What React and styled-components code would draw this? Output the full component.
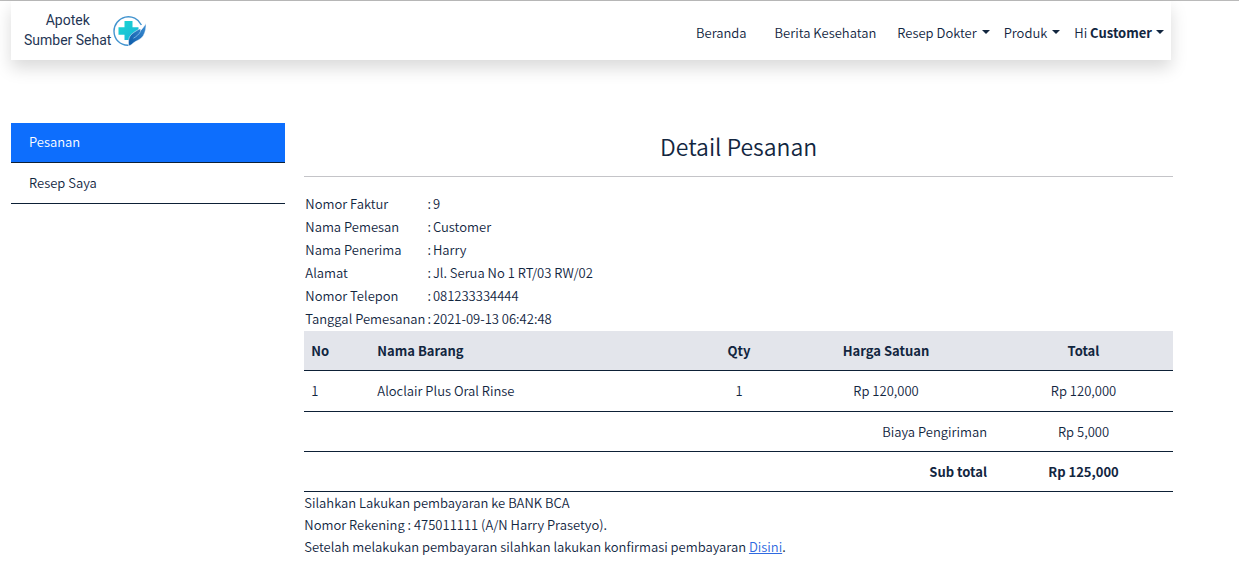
import React from "react";
import styled, { createGlobalStyle } from "styled-components";

const ink = "#12263f";
const line = "#0d2036";

const GlobalStyle = createGlobalStyle`
  *, *::before, *::after { box-sizing: border-box; }
  body {
    margin: 0;
    background: #fff;
    color: ${ink};
    font-family: "Noto Sans CJK JP", "Noto Sans", sans-serif;
    font-size: 13px;
    font-weight: 350;
    line-height: 22px;
  }
  button { font: inherit; color: inherit; }
  b { font-weight: 700; }
`;

const Page = styled.div`
  border-top: 1px solid #bababa;
  padding: 0 66px 24px 11px;
`;

const Header = styled.header`
  display: flex;
  align-items: center;
  justify-content: space-between;
  height: 59px;
  margin-right: 2px;
  background: #fff;
  box-shadow: 0 8px 16px rgba(0, 0, 0, 0.15);
`;

const Brand = styled.a`
  display: flex;
  align-items: center;
  gap: 2px;
  padding-left: 13px;
  color: #1f3655;
  text-decoration: none;
`;

const BrandName = styled.span`
  padding-bottom: 2px;
  font-family: Roboto, sans-serif;
  font-size: 14px;
  font-weight: 400;
  line-height: 20px;
  text-align: center;
`;

const Nav = styled.nav`
  display: flex;
  align-items: center;
  padding-top: 5px;
`;

const NavLink = styled.a`
  margin-right: ${(p) => p.$space}px;
  padding: 0 7px;
  color: inherit;
  text-decoration: none;
`;

const NavToggle = styled.button`
  display: flex;
  align-items: center;
  gap: ${(p) => p.$gap}px;
  padding: 0 7px;
  border: 0;
  background: none;
  white-space: pre;
  cursor: pointer;

  &::after {
    content: "";
    margin-bottom: 3px;
    border-top: 4px solid;
    border-right: 4px solid transparent;
    border-left: 4px solid transparent;
  }
`;

const Columns = styled.div`
  display: grid;
  grid-template-columns: 24fr 76fr;
  gap: 19px;
  align-items: start;
  padding-top: 63px;
`;

const SideMenu = styled.nav`
  display: flex;
  flex-direction: column;
`;

const SideLink = styled.a`
  padding: 8px 18px 9px;
  border-bottom: 1px solid ${line};
  background: ${(p) => (p.$active ? "#0d6efd" : "#fff")};
  color: ${(p) => (p.$active ? "#fff" : ink)};
  text-decoration: none;

  & + & { padding-top: 9px; }
`;

const Title = styled.h1`
  margin: 0;
  padding: 7px 0 14px;
  border-bottom: 1px solid #c4c4c8;
  font-size: 23px;
  font-weight: inherit;
  line-height: 32px;
  text-align: center;
`;

const InfoTable = styled.table`
  margin: 15px 0 1px;
  border-collapse: collapse;
  line-height: 21px;

  th, td {
    padding: 1px;
    font-weight: inherit;
    text-align: left;
  }
`;

const ItemTable = styled.table`
  width: 100%;
  table-layout: fixed;
  border-collapse: separate;
  border-spacing: 0;

  thead { background: #e3e5eb; }
  tbody td { height: 41px; }
`;

const Col = styled.col`
  width: ${(p) => p.$width}px;
`;

const Cell = styled.td`
  height: 40px;
  padding: 8px 7px;
  border-bottom: 1px solid ${line};
  font-weight: ${(p) => (p.$bold ? 700 : "inherit")};
  text-align: ${(p) => p.$align || "left"};
`;

const Payment = styled.p`
  margin: 0;
`;

const TextLink = styled.a`
  color: #2f6ae0;
`;

const details = [
  ["Nomor Faktur", "9"],
  ["Nama Pemesan", "Customer"],
  ["Nama Penerima", "Harry"],
  ["Alamat", "Jl. Serua No 1 RT/03 RW/02"],
  ["Nomor Telepon", "081233334444"],
  ["Tanggal Pemesanan", "2021-09-13 06:42:48"],
];

const items = [
  { no: 1, name: "Aloclair Plus Oral Rinse", qty: 1, price: "Rp 120,000", total: "Rp 120,000" },
];

function Logo() {
  return (
    <svg width="34" height="32" viewBox="0 0 34 32" aria-hidden="true">
      <defs>
        <linearGradient id="cross" x1="0" y1="0" x2="1" y2="1">
          <stop offset="0" stopColor="#1bd6cf" />
          <stop offset="1" stopColor="#18b4dc" />
        </linearGradient>
        <linearGradient id="hand" x1="1" y1="0" x2="0" y2="1">
          <stop offset="0" stopColor="#3f8fd4" />
          <stop offset="1" stopColor="#0b5aa8" />
        </linearGradient>
      </defs>
      <path d="M15.5 30.2C7 30.6 1 24 1 16.2A14.4 14.4 0 0 1 28.4 10" fill="none" stroke="#4394cf" strokeWidth="1.4" />
      <path d="M11.500 6h8v6.200h6v7.600h-6V25h-8v-5.200H5.500v-7.600h6z" fill="url(#cross)" />
      <path
        d="M32.900 8.500c.4 4-.4 8.500-2.600 12.200-2.300 3.800-6.300 4.600-9.300 6.800-1.800 1.300-2.800 2.600-5.200 3.500-.6-4.500-.5-8.500 2.200-11.200 2.400-2.400 5.400-4.100 8-5.500 1.500-.7 2.400.2 1.500 1.400 2.100-2 3.800-4.600 5.400-7.200z"
        fill="url(#hand)"
        stroke="#fff"
        strokeWidth=".5"
      />
      <path d="M20.500 23.200c2.800-1.600 5.500-3.800 7.200-7" fill="none" stroke="#8fc5ee" strokeWidth=".8" />
    </svg>
  );
}

export default function App() {
  return (
    <>
      <GlobalStyle />
      <Page>
        <Header>
          <Brand href="#beranda">
            <BrandName>
              Apotek
              <br />
              Sumber Sehat
            </BrandName>
            <Logo />
          </Brand>
          <Nav aria-label="Utama">
            <NavLink href="#beranda" $space={14}>Beranda</NavLink>
            <NavLink href="#berita" $space={7}>Berita Kesehatan</NavLink>
            <NavToggle type="button" $gap={5}>Resep Dokter</NavToggle>
            <NavToggle type="button" $gap={5}>Produk</NavToggle>
            <NavToggle type="button" $gap={4}>
              <span>Hi <b>Customer</b></span>
            </NavToggle>
          </Nav>
        </Header>

        <Columns>
          <SideMenu aria-label="Akun">
            <SideLink href="#pesanan" $active aria-current="page">Pesanan</SideLink>
            <SideLink href="#resep">Resep Saya</SideLink>
          </SideMenu>

          <main>
            <Title>Detail Pesanan</Title>
            <InfoTable>
              <tbody>
                {details.map(([label, value]) => (
                  <tr key={label}>
                    <th scope="row">{label}</th>
                    <td>:</td>
                    <td>{value}</td>
                  </tr>
                ))}
              </tbody>
            </InfoTable>

            <ItemTable>
              <colgroup>
                <Col $width={66} />
                <col />
                <Col $width={78} />
                <Col $width={216} />
                <Col $width={179} />
              </colgroup>
              <thead>
                <tr>
                  <Cell as="th" scope="col" $bold>No</Cell>
                  <Cell as="th" scope="col" $bold>Nama Barang</Cell>
                  <Cell as="th" scope="col" $bold $align="center">Qty</Cell>
                  <Cell as="th" scope="col" $bold $align="center">Harga Satuan</Cell>
                  <Cell as="th" scope="col" $bold $align="center">Total</Cell>
                </tr>
              </thead>
              <tbody>
                {items.map((item) => (
                  <tr key={item.no}>
                    <Cell>{item.no}</Cell>
                    <Cell>{item.name}</Cell>
                    <Cell $align="center">{item.qty}</Cell>
                    <Cell $align="center">{item.price}</Cell>
                    <Cell $align="center">{item.total}</Cell>
                  </tr>
                ))}
              </tbody>
              <tfoot>
                <tr>
                  <Cell as="th" scope="row" colSpan={4} $align="right">Biaya Pengiriman</Cell>
                  <Cell $align="center">Rp 5,000</Cell>
                </tr>
                <tr>
                  <Cell as="th" scope="row" colSpan={4} $bold $align="right">Sub total</Cell>
                  <Cell $bold $align="center">Rp 125,000</Cell>
                </tr>
              </tfoot>
            </ItemTable>

            <Payment>
              Silahkan Lakukan pembayaran ke BANK BCA
              <br />
              Nomor Rekening : 475011111 (A/N Harry Prasetyo).
              <br />
              Setelah melakukan pembayaran silahkan lakukan konfirmasi pembayaran{" "}
              <TextLink href="#konfirmasi">Disini</TextLink>.
            </Payment>
          </main>
        </Columns>
      </Page>
    </>
  );
}
